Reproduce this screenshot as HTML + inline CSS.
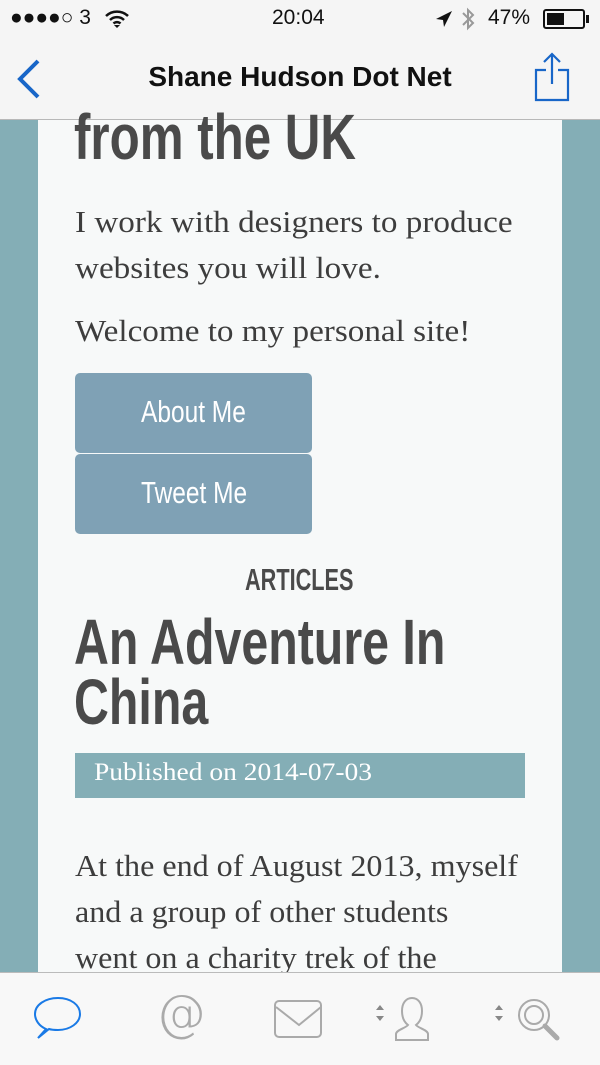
<!DOCTYPE html>
<html><head><meta charset="utf-8"><style>
*{margin:0;padding:0;box-sizing:border-box}
body{width:600px;height:1065px;overflow:hidden;background:#84aeb6;position:relative;font-family:"Liberation Sans",sans-serif}
.a{position:absolute;white-space:nowrap;transform-origin:left top}
.panel{position:absolute;left:38px;top:120px;width:524px;height:852px;background:#f7f9f9}
.serif{font-family:"Liberation Serif",serif;color:#3d3d3d;font-size:31px}
.btn{position:absolute;left:75px;width:237px;height:80px;background:#7fa1b5;border-radius:5px}
.bt{color:#fff;font-size:31px;top:21px}
</style></head><body>
<div class="a" style="left:0;top:0;width:600px;height:120px;background:#f5f5f5;border-bottom:1px solid #b8b8b8"></div>
<div class="a" style="left:10px;top:6px;font-size:21px;color:#111">●●●●○ 3</div>
<svg class="a" style="left:104px;top:9px" width="26" height="20" viewBox="0 0 26 20"><path d="M2 7a16 16 0 0 1 22 0M6 11a10 10 0 0 1 14 0M9.5 14.5a5 5 0 0 1 7 0" stroke="#111" stroke-width="2.5" fill="none"/><path d="M13 19l-3-3h6z" fill="#111"/></svg>
<div class="a" style="left:272px;top:6px;font-size:21px;color:#111">20:04</div>
<svg class="a" style="left:434px;top:9px" width="20" height="20"><path d="M18 2L2 10l7 1 1 7z" fill="#111"/></svg>
<svg class="a" style="left:460px;top:6px" width="16" height="26"><path d="M3 7l10 10-5 5V4l5 5L3 19" stroke="#999" stroke-width="2" fill="none"/></svg>
<div class="a" style="left:488px;top:6px;font-size:21px;color:#111">47%</div>
<div class="a" style="left:543px;top:9px;width:42px;height:20px;border:2px solid #111;border-radius:3px"><div style="margin:2px;width:17px;height:12px;background:#111"></div></div>
<div class="a" style="left:586px;top:15px;width:3px;height:8px;background:#111"></div>
<svg class="a" style="left:12px;top:58px" width="30" height="42"><path d="M26 3L8 21l18 18" stroke="#1866c8" stroke-width="4" fill="none"/></svg>
<div class="a" style="left:0;width:600px;top:61px;text-align:center;font-size:28px;font-weight:bold;color:#111">Shane Hudson Dot Net</div>
<svg class="a" style="left:530px;top:50px" width="44" height="54"><path d="M16 20H6v30h32V20H28M22 34V4M14 12l8-8 8 8" stroke="#1866c8" stroke-width="2.2" fill="none"/></svg>
<div class="panel"></div>
<div class="a" style="left:74px;top:100px;font-size:64px;font-weight:bold;color:#4a4a4a;transform:scaleX(0.77)">from the UK</div>
<div class="a serif" style="left:75px;top:204px;transform:scaleX(1.07)">I work with designers to produce</div>
<div class="a serif" style="left:75px;top:250px;transform:scaleX(1.07)">websites you will love.</div>
<div class="a serif" style="left:75px;top:313px;transform:scaleX(1.07)">Welcome to my personal site!</div>
<div class="btn" style="top:373px"><div class="a bt" style="left:66px;transform:scaleX(0.79)">About Me</div></div>
<div class="btn" style="top:454px"><div class="a bt" style="left:66px;transform:scaleX(0.79)">Tweet Me</div></div>
<div class="a" style="left:245px;top:562px;font-size:31px;font-weight:bold;color:#4a4a4a;transform:scaleX(0.70)">ARTICLES</div>
<div class="a" style="left:74px;top:612px;font-size:64px;font-weight:bold;color:#4a4a4a;line-height:60px;transform:scaleX(0.755)">An Adventure In<br>China</div>
<div class="a" style="left:75px;top:753px;width:450px;height:45px;background:#84aeb6"></div>
<div class="a serif" style="left:94px;top:759px;font-size:25px;color:#fff;transform:scaleX(1.1)">Published on 2014-07-03</div>
<div class="a serif" style="left:75px;top:848px;transform:scaleX(1.035)">At the end of August 2013, myself</div>
<div class="a serif" style="left:75px;top:894px;transform:scaleX(1.035)">and a group of other students</div>
<div class="a serif" style="left:75px;top:940px;transform:scaleX(1.035)">went on a charity trek of the</div>
<div class="a" style="left:0;top:972px;width:600px;height:93px;background:#f8f8f8;border-top:1px solid #bbb"></div>
<svg class="a" style="left:30px;top:995px" width="60" height="50"><path d="M8 43l8-9C9 31 5 25 5 19 5 10 15 3 28 3s22 7 22 16-10 16-22 16c-3 0-6 0-9-1z" stroke="#1a7ae6" stroke-width="2" fill="none"/></svg>
<div class="a" style="left:156px;top:984px;font-size:50px;color:#aaa;font-family:'DejaVu Sans';font-weight:200">@</div>
<svg class="a" style="left:238px;top:995px" width="90" height="50"><rect x="37" y="6" width="46" height="36" rx="4" stroke="#aaa" stroke-width="2" fill="none"/><path d="M38 12l23 18 22-18" stroke="#aaa" stroke-width="2" fill="none"/></svg>
<svg class="a" style="left:370px;top:995px" width="80" height="50"><path d="M6 15l4-5 4 5zM6 21l4 5 4-5z" fill="#888"/><path d="M26 45v-6c0-4 10-6 12-9-4-3-6-8-6-14 0-8 4-13 10-13s10 5 10 13c0 6-2 11-6 14 2 3 12 5 12 9v6z" stroke="#aaa" stroke-width="2" fill="none"/></svg>
<svg class="a" style="left:490px;top:995px" width="80" height="50"><path d="M5 15l4-5 4 5zM5 21l4 5 4-5z" fill="#888"/><circle cx="44" cy="20" r="15" stroke="#aaa" stroke-width="2" fill="none"/><circle cx="44" cy="20" r="9" stroke="#aaa" stroke-width="2" fill="none"/><path d="M55 31l12 12" stroke="#aaa" stroke-width="5" stroke-linecap="round"/></svg>
</body></html>
